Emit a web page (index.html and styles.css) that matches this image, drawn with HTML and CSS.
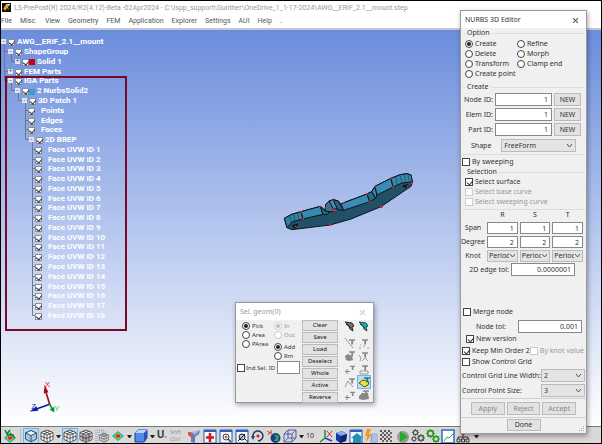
FILE: index.html
```html
<!DOCTYPE html>
<html lang="en">

<head>
  <meta charset="UTF-8">
  <meta name="viewport" content="width=device-width, initial-scale=1.0">
  <title>LS-PrePost</title>
  <link rel="stylesheet" href="styles.css">
</head>

<body>
  <!-- shared icon shapes -->
  <svg class="defs" width="0" height="0">
    <symbol id="funnel" viewBox="0 0 8 8"><path d="M0 1H8V3H5.500V8H3V3H0z"/></symbol>
    <symbol id="wirecube" viewBox="0 0 14 14">
      <path d="M7 1L13 3.500V10.500L7 13.500L1 10.500V3.500z" fill="#fff"/>
      <path d="M7 1L13 3.500V10.500L7 13.500L1 10.500V3.500zM1 3.500L7 6L13 3.500M7 6V13.500M1 7L7 9.500L13 7M4 2.200L10 4.800V12M10 2.200L4 4.800V12" fill="none" stroke="#333" stroke-width=".8"/>
    </symbol>
    <symbol id="window" viewBox="0 0 14 14">
      <path d="M1 1H13V14H1z" fill="#f6f9ff" stroke="#2a58a8"/><path d="M1 1H13V3H1z" fill="#2a62c4"/>
    </symbol>
    <symbol id="contour" viewBox="0 0 14 14">
      <path d="M1 7L7 2L13 7L7 12z" fill="#28a0d0"/><path d="M2.500 7L7 3L11.500 7L7 11z" fill="#50d050"/>
      <path d="M4 7L7 4.500L10 7L7 9.500z" fill="#f0e020"/><ellipse cx="7" cy="7" rx="2.200" ry="1.700" fill="#e02010"/>
    </symbol>
    <symbol id="gear" viewBox="0 0 8 8">
      <circle cx="4" cy="4" r="2.500" fill="none" stroke="currentColor" stroke-width="1.500"/>
      <path d="M4 0V1.500M4 6.500V8M0 4H1.500M6.500 4H8M1.200 1.200L2.200 2.200M5.800 5.800L6.800 6.800M6.800 1.200L5.800 2.200M2.200 5.800L1.200 6.800" stroke="currentColor"/>
    </symbol>
  </svg>

  <header class="titlebar">
    <svg class="app-icon" viewBox="0 0 9 9"><path d="M0 0H9V9H0z" fill="#111"/><path d="M1 6L3 3L4 1H5L7 2L6 4L7 7L5 5L3 8L2 6z" fill="#e8a020"/><path d="M5 1L8 1L7 3z" fill="#fff"/></svg>
    <span>LS-PrePost(R) 2024/R2(4.12)-Beta -02Apr2024 - C:\lspp_support\Gunther\OneDrive_1_1-17-2024\AWG__ERIF_2.1__mount.step</span>
  </header>

  <nav class="menubar">
    <a href="#">File</a>
    <a href="#">Misc.</a>
    <a href="#">View</a>
    <a href="#">Geometry</a>
    <a href="#">FEM</a>
    <a href="#">Application</a>
    <a href="#">Explorer</a>
    <a href="#">Settings</a>
    <a href="#">AUI</a>
    <a href="#">Help</a>
    <span>.</span>
  </nav>

  <main class="viewport">
    <div class="tree">
      <svg class="tree-lines" viewBox="0 0 45 283"><path d="M3.500 5V43.500H9M3.500 34.500H9M3.500 14.500H9M10.500 15V24.500H16M10.500 44V53.500H16M17.500 54V63.500H22M24.500 63V102.500H30M24.500 73.500H29M24.500 83.500H29M24.500 92.500H29M31.500 102V278.500H36M31.500 112.500H36M31.500 122.500H36M31.500 131.500H36M31.500 141.500H36M31.500 151.500H36M31.500 161.500H36M31.500 170.500H36M31.500 180.500H36M31.500 190.500H36M31.500 200.500H36M31.500 209.500H36M31.500 219.500H36M31.500 229.500H36M31.500 239.500H36M31.500 248.500H36M31.500 258.500H36M31.500 268.500H36"/></svg>
      <label class="node l0"><i class="exp">-</i><input type="checkbox" checked>AWG__ERIF_2.1__mount</label>
      <label class="node l1"><i class="exp">-</i><input type="checkbox" checked>ShapeGroup</label>
      <label class="node l2"><i class="exp">+</i><input type="checkbox" checked><i class="swatch red"></i>Solid 1</label>
      <label class="node l1"><i class="exp">+</i><input type="checkbox" checked>FEM Parts</label>
      <label class="node l1"><i class="exp">-</i><input type="checkbox" checked>IGA Parts</label>
      <label class="node l2"><i class="exp">-</i><input type="checkbox" checked><i class="swatch blue"></i>2 NurbsSolid2</label>
      <label class="node l3"><i class="exp">-</i><input type="checkbox" checked>3D Patch 1</label>
      <label class="node l3 leaf"><input type="checkbox" checked>Points</label>
      <label class="node l3 leaf"><input type="checkbox" checked>Edges</label>
      <label class="node l3 leaf"><input type="checkbox" checked>Faces</label>
      <label class="node l4"><i class="exp">-</i><input type="checkbox" checked>2D BREP</label>
      <label class="node l4 leaf"><input type="checkbox" checked>Face UVW ID 1</label>
      <label class="node l4 leaf"><input type="checkbox" checked>Face UVW ID 2</label>
      <label class="node l4 leaf"><input type="checkbox" checked>Face UVW ID 3</label>
      <label class="node l4 leaf"><input type="checkbox" checked>Face UVW ID 4</label>
      <label class="node l4 leaf"><input type="checkbox" checked>Face UVW ID 5</label>
      <label class="node l4 leaf"><input type="checkbox" checked>Face UVW ID 6</label>
      <label class="node l4 leaf"><input type="checkbox" checked>Face UVW ID 7</label>
      <label class="node l4 leaf"><input type="checkbox" checked>Face UVW ID 8</label>
      <label class="node l4 leaf"><input type="checkbox" checked>Face UVW ID 9</label>
      <label class="node l4 leaf"><input type="checkbox" checked>Face UVW ID 10</label>
      <label class="node l4 leaf"><input type="checkbox" checked>Face UVW ID 11</label>
      <label class="node l4 leaf"><input type="checkbox" checked>Face UVW ID 12</label>
      <label class="node l4 leaf"><input type="checkbox" checked>Face UVW ID 13</label>
      <label class="node l4 leaf"><input type="checkbox" checked>Face UVW ID 14</label>
      <label class="node l4 leaf"><input type="checkbox" checked>Face UVW ID 15</label>
      <label class="node l4 leaf"><input type="checkbox" checked>Face UVW ID 16</label>
      <label class="node l4 leaf"><input type="checkbox" checked>Face UVW ID 17</label>
      <label class="node l4 leaf"><input type="checkbox" checked>Face UVW ID 18</label>
    </div>
    <div class="highlight"></div>

    <!-- mount part -->
    <svg class="model" viewBox="0 0 450 225">
      <g stroke="#0a161c" stroke-width="3" stroke-linejoin="round">
        <path d="M28 160L50 148L78 140L136 124L144 130L150 138L152 118L162 108L175 104L190 108L198 118L204 114L276 87L290 80L300 64L348 40L376 29L396 26L408 30L412 52L408 64L318 125L228 162L165 180L50 194L36 188z" fill="#225066"/>
        <path d="M28 160L50 148L78 140L84 162L52 170L36 188z" fill="#357fa3"/>
        <path d="M78 140L136 124L144 148L84 162z" fill="#3789ae"/>
        <path d="M136 124L150 138L162 140L158 148L144 148z" fill="#2d6f8d"/>
        <path d="M152 118L162 108L176 128L180 140L162 140L150 138z" fill="#2f7898"/>
        <path d="M162 108L175 104L188 128L176 134z" fill="#3b8cae"/>
        <path d="M175 104L190 108L206 136L188 134z" fill="#28647f"/>
        <path d="M198 118L204 114L276 87L284 110L206 136z" fill="#3a8cb2"/>
        <path d="M276 87L290 80L302 100L284 110z" fill="#286985"/>
        <path d="M290 80L300 64L306 90L302 100z" fill="#357fa0"/>
        <path d="M300 64L348 40L354 66L306 90z" fill="#3a8cb2"/>
        <path d="M348 40L376 29L396 26L408 30L412 50L380 54L354 66z" fill="#3788ab"/>
      </g>
      <path d="M44 152L48 172M56 148L60 168M67 144L72 164M362 36L366 58M376 31L380 52M388 28L392 50M399 28L402 48" stroke="#174b60" stroke-width="2"/>
      <path d="M52 184L68 178M56 180L60 190M384 65L400 60M390 60L394 68" stroke="#080c10" stroke-width="6"/>
      <path d="M76 138h5v5h-5zM82 160h5v5h-5zM133 122h5v5h-5zM170 104h5v5h-5zM150 125h5v5h-5zM163 126h5v5h-5zM175 133h7v7h-7zM204 112h5v5h-5zM274 84h5v5h-5zM281 107h5v5h-5zM298 62h5v5h-5zM346 37h5v5h-5zM351 63h5v5h-5zM316 122h7v7h-7zM162 176h6v6h-6zM58 182h5v5h-5zM395 61h5v5h-5zM408 52h5v5h-5z" fill="#e82030"/>
    </svg>

    <svg class="axes" viewBox="0 0 120 110">
      <path d="M68 72L55 30" stroke="#a01010" stroke-width="5"/><path d="M53 14L50 40L64 36z" fill="#a01010"/>
      <path d="M68 72L24 88" stroke="#101a9a" stroke-width="5"/><path d="M8 94L28 78L34 92z" fill="#101a9a"/>
      <path d="M68 72L78 90" stroke="#109020" stroke-width="5"/><path d="M82 97L68 88L82 80z" fill="#109020"/>
      <text x="53" y="22" fill="#f01818">X</text>
      <text x="13" y="86" fill="#2030c8">Z</text>
      <text x="82" y="92" fill="#20d830">Y</text>
    </svg>
  </main>

  <footer class="toolbar">
    <div class="tools">
      <svg viewBox="0 0 14 14"><use href="#contour" y="2"/><path d="M2 1L4 5L7 1M7 4L12 9M4 6H11" stroke="#188030" fill="none" stroke-width="1.500"/></svg>
      <i class="sep"></i>
      <svg class="on" viewBox="0 0 14 14"><path d="M1.500 4L7 1.500L12.500 4V10L7 13L1.500 10z" fill="#a9c5e2" stroke="#35516c"/><path d="M1.500 4L7 6.500L12.500 4L7 1.500z" fill="#eef6ff" stroke="#35516c"/><path d="M7 6.500V13" stroke="#35516c"/></svg>
      <svg><use href="#wirecube"/></svg>
      <i class="arrow"></i>
      <svg class="on"><use href="#wirecube"/></svg>
      <svg><use href="#wirecube"/><path d="M2 4L7 7L12 4V10L7 13L2 10z" fill="#444" opacity=".4"/></svg>
      <svg viewBox="0 0 14 14"><path d="M1 14V1H9M3 14V3H11" stroke="#8c8cd8" fill="none" stroke-dasharray="1 1"/><use href="#wirecube" x="4" y="3" width="10" height="11"/></svg>
      <svg><use href="#contour"/></svg>
      <i class="arrow"></i>
      <svg viewBox="0 0 14 14"><path d="M1 4L4 1H13V9L10 13H1z" fill="#5389ec" stroke="#1f3f9a"/><path d="M1 4L4 1H13L10 4z" fill="#b8d4ff"/><path d="M10 4L13 1V9L10 13z" fill="#2853b8"/></svg>
      <i class="arrow"></i>
      <b class="undo">U<small>●</small></b>
      <span class="shift">Shft<br>Ctrl</span>
      <svg viewBox="0 0 14 14"><path d="M1 3H9L13 1L12 5L8 8V14L4 13V8z" fill="#5a80c8"/><path d="M1 3L7 5L5 9L1 6z" fill="#e05040"/><path d="M4 3L13 1L8 6z" fill="#9ab6e4"/></svg>
      <svg viewBox="0 0 14 14"><use href="#window"/><path d="M7 4V13M3 8.500H11" stroke="#d01818" stroke-width="2.500"/></svg>
      <svg viewBox="0 0 14 14"><use href="#window"/><circle cx="7" cy="8" r="3" fill="#fff" stroke="#345"/><path d="M7 6.500V9.500M5.500 8H8.500" stroke="#d01818"/><path d="M9 10L12 13" stroke="#345" stroke-width="1.500"/></svg>
      <svg viewBox="0 0 14 14"><use href="#window"/><circle cx="7" cy="8" r="3" fill="#bcd" stroke="#222"/><path d="M3 12L10 5M10 10L13 13" stroke="#222"/></svg>
      <svg viewBox="0 0 14 14"><path d="M2 8A5 5 0 1 1 7 12" fill="none" stroke="#253a60" stroke-width="1.500"/><path d="M0 7L4 7L2 11z" fill="#253a60"/><circle cx="7" cy="7" r="1.500" fill="#d01818"/></svg>
      <svg viewBox="0 0 14 14"><path d="M0 2L5 5M1 6L3 3M4 1V4" stroke="#e03030"/><circle cx="8.500" cy="9" r="5" fill="#183b98"/><path d="M7 5L12 7L11 12L7 12L9 9z" fill="#28b038"/></svg>
      <svg viewBox="0 0 14 14"><path d="M1 5H9V13H1zM5 1H13V9H5zM1 5L5 1M9 5L13 1M9 13L13 9M1 13L5 9" fill="none" stroke="#5262a6"/></svg>
      <i class="arrow"></i>
      <span class="count">10</span>
    </div>
    <div class="tools tight">
      <svg viewBox="0 0 14 14"><path d="M6 1V9L1 13" stroke="#209030" fill="none" stroke-width="1.500"/><path d="M6 9L13 12" stroke="#2040c0" stroke-width="1.500"/><path d="M8 2L13 8M13 2L8 8" stroke="#d03030"/></svg>
      <svg viewBox="0 0 14 14"><path d="M2 4L8 2L13 5L12 12L6 14L2 11z" fill="#1736a8"/><path d="M2 4L8 2L13 5L7 7z" fill="#87a9f0"/><path d="M7 7L13 5L12 12L6 14z" fill="#0e2370"/></svg>
      <svg viewBox="0 0 14 14"><use href="#window"/><path d="M2 9L8 4L14 9H12V14H4V9z" fill="#1f91b6"/></svg>
      <svg viewBox="0 0 14 14"><path d="M3 0H7L5 5H8L2 13L3 7H1z" fill="#f09a18"/><path d="M8 5H13V13H7zM8 7H12M8 9H12M8 11H12" fill="#e7ecfa" stroke="#7f92c9"/></svg>
      <svg viewBox="0 0 14 14"><path d="M1 2H13M1 6H13M1 10H13" stroke="#555" stroke-width="2" stroke-dasharray="2 2"/><path d="M3 4H14M3 8H14M3 12H14" stroke="#666" stroke-width="2" stroke-dasharray="2 2"/></svg>
    </div>
    <div class="tools tight">
      <svg viewBox="0 0 14 14"><circle cx="7" cy="8" r="6" fill="#999"/><path d="M4 2L12 8L4 13z" fill="#1fae28"/></svg>
      <svg viewBox="0 0 14 14" color="#555"><use href="#gear" x="1" y="0" width="7" height="7"/><use href="#gear" x="6" y="5" width="8" height="8"/><use href="#gear" x="0" y="7" width="6" height="6"/></svg>
      <svg viewBox="0 0 14 14" color="#2b9a20"><use href="#gear" x="0" y="0" width="9" height="9"/><use href="#gear" x="6" y="6" width="8" height="8"/></svg>
      <svg viewBox="0 0 14 14"><path d="M1 1H13V14H1z" fill="#fff" stroke="#2a6fc0" stroke-width="1.500"/><path d="M3 12L6 8L8 9L12 5" fill="none" stroke="#30a060"/></svg>
      <svg viewBox="0 0 14 14"><path d="M5 1H9V5H5z" fill="#d39b27" stroke="#6f5516"/><path d="M7 5V8M2 11V8H12V11M7 8V11" stroke="#333" fill="none"/><path d="M1 10H4V13H1zM5.500 10H8.500V13H5.500zM10 10H13V13H10z" fill="#ddd" stroke="#333"/></svg>
      <i class="arrow"></i>
    </div>
  </footer>

  <!-- geometry selection dialog -->
  <section class="dialog geom">
    <div class="dialog-title"><span>Sel. geom(0)</span><button class="close" aria-label="Close"></button></div>
    <div class="geom-body">
      <div class="geom-left">
        <div class="pick">
          <div>
            <label><input type="radio" name="pick" checked>Pick</label>
            <label><input type="radio" name="pick">Area</label>
            <label><input type="radio" name="pick">PArea</label>
          </div>
          <div>
            <label class="off"><input type="radio" name="inout" checked disabled>In</label>
            <label class="off"><input type="radio" name="inout" disabled>Out</label>
            <label class="add"><input type="radio" name="add" checked>Add</label>
            <label><input type="radio" name="add">Rm</label>
          </div>
        </div>
        <div class="ind">
          <label><input type="checkbox">Ind Sel.</label>
          <label for="geom-id">ID</label>
          <input type="text" id="geom-id">
        </div>
      </div>
      <div class="geom-buttons">
        <button>Clear</button>
        <button>Save</button>
        <button>Load</button>
        <button>Deselect</button>
        <button>Whole</button>
        <button>Active</button>
        <button>Reverse</button>
      </div>
      <div class="geom-icons">
        <svg viewBox="0 0 12 12"><path d="M1 2L8 3L10 6L8 7L9 11L6 9L5 6z" fill="#777" stroke="#222"/><path d="M2 4L7 8" stroke="#222"/></svg>
        <svg viewBox="0 0 12 12"><path d="M1 2L8 3L10 6L8 7L9 11L6 9L5 6z" fill="#20a8a8" stroke="#174f55"/><path d="M2 4L7 8" stroke="#174f55"/></svg>
        <svg viewBox="0 0 12 12"><path d="M1 1L9 11" stroke="#999"/><use href="#funnel" x="5" y="1" width="6" height="7"/></svg>
        <svg viewBox="0 0 12 12"><path d="M1 11H3M5 9H7M9 11H11M2 8H3" stroke="#999"/><use href="#funnel" x="4" y="1" width="6" height="7"/></svg>
        <svg viewBox="0 0 12 12"><path d="M1 6L4 4L8 6L9 10L5 11L2 10z"/><use href="#funnel" x="5" y="0" width="6" height="7"/></svg>
        <svg viewBox="0 0 12 12"><path d="M1 5L3 8L2 11M4 11L7 8L10 11" stroke="#999" fill="none"/><use href="#funnel" x="4" y="1" width="6" height="7"/></svg>
        <svg viewBox="0 0 12 12"><path d="M3 6V11M1 8.500H6" stroke="#888"/><use href="#funnel" x="6" y="1" width="5" height="7"/></svg>
        <svg viewBox="0 0 12 12"><path d="M2 8H10V11H2z" stroke="#999" fill="none"/><use href="#funnel" x="4" y="1" width="6" height="7"/></svg>
        <svg viewBox="0 0 12 12"><path d="M1 11L4 5L9 11" stroke="#999" fill="none"/><use href="#funnel" x="5" y="1" width="6" height="7"/></svg>
        <svg class="on" viewBox="0 0 12 12"><path d="M1 7L5 4L11 6L10 9L6 11L4 9z" fill="#f0e628" stroke="#555a18"/><use href="#funnel" x="6" y="0" width="6" height="7" fill="#187f91"/></svg>
        <svg viewBox="0 0 12 12"><path d="M3 6V11M1 8.500H6" stroke="#888"/><use href="#funnel" x="6" y="1" width="5" height="7"/></svg>
        <svg viewBox="0 0 12 12"><path d="M1 7L4 4L10 4L11 10L5 11L1 10z" fill="#888"/><use href="#funnel" x="5" y="0" width="6" height="7"/></svg>
      </div>
    </div>
  </section>

  <!-- nurbs editor -->
  <section class="dialog editor">
    <div class="dialog-title"><span>NURBS 3D Editor</span><button class="close" aria-label="Close"></button></div>
    <fieldset>
      <legend>Option</legend>
      <div class="options">
        <label><input type="radio" name="option" checked>Create</label>
        <label><input type="radio" name="option">Refine</label>
        <label><input type="radio" name="option">Delete</label>
        <label><input type="radio" name="option">Morph</label>
        <label><input type="radio" name="option">Transform</label>
        <label><input type="radio" name="option">Clamp end</label>
        <label><input type="radio" name="option">Create point</label>
      </div>
    </fieldset>
    <fieldset class="create">
      <legend>Create</legend>
      <div class="ids">
        <label for="node-id">Node ID:</label><input type="text" id="node-id" value="1"><button>NEW</button>
        <label for="elem-id">Elem ID:</label><input type="text" id="elem-id" value="1"><button>NEW</button>
        <label for="part-id">Part ID:</label><input type="text" id="part-id" value="1"><button>NEW</button>
      </div>
      <div class="shape">
        <label for="shape">Shape</label>
        <select id="shape"><option>FreeForm</option></select>
      </div>
    </fieldset>
    <label class="check sweep"><input type="checkbox">By sweeping</label>
    <fieldset class="selection">
      <legend>Selection</legend>
      <label class="check"><input type="checkbox" checked>Select surface</label>
      <label class="check off"><input type="checkbox" disabled>Select base curve</label>
      <label class="check off"><input type="checkbox" disabled>Select sweeping curve</label>
    </fieldset>
    <div class="rst">
      <span></span><span>R</span><span>S</span><span>T</span>
      <label for="span-r">Span</label>
      <input type="text" id="span-r" value="1"><input type="text" aria-label="Span S" value="1"><input type="text" aria-label="Span T" value="1">
      <label for="degree-r">Degree</label>
      <input type="text" id="degree-r" value="2"><input type="text" aria-label="Degree S" value="2"><input type="text" aria-label="Degree T" value="2">
      <label for="knot-r">Knot</label>
      <select id="knot-r"><option>Periodic</option></select>
      <select aria-label="Knot S"><option>Periodic</option></select>
      <select aria-label="Knot T"><option>Periodic</option></select>
    </div>
    <div class="tol edge">
      <label for="edge-tol">2D edge tol:</label>
      <input type="text" id="edge-tol" value="0.0000001">
    </div>
    <label class="check merge"><input type="checkbox">Merge node</label>
    <div class="tol">
      <label for="node-tol">Node tol:</label>
      <input type="text" id="node-tol" value="0.001">
    </div>
    <label class="check version"><input type="checkbox" checked>New version</label>
    <div class="order">
      <label class="check"><input type="checkbox" checked>Keep Min Order 2</label>
      <label class="check off"><input type="checkbox" disabled>By knot value</label>
    </div>
    <label class="check show"><input type="checkbox">Show Control Grid</label>
    <div class="control">
      <label for="grid-width">Control Grid Line Width:</label>
      <select id="grid-width"><option>2</option></select>
    </div>
    <div class="control">
      <label for="point-size">Control Point Size:</label>
      <select id="point-size"><option>3</option></select>
    </div>
    <div class="actions">
      <button disabled>Apply</button>
      <button disabled>Reject</button>
      <button disabled>Accept</button>
    </div>
    <div class="finish"><button class="done">Done</button></div>
    <svg class="grip" viewBox="0 0 6 6"><path d="M4 0h1v1h-1zM2 2h1v1h-1zM4 2h1v1h-1zM0 4h1v1h-1zM2 4h1v1h-1zM4 4h1v1h-1z" fill="#aaa"/></svg>
  </section>
</body>

</html>
```
FILE: styles.css
```css
* {
  box-sizing: border-box;
}

body {
  display: flex;
  flex-direction: column;
  position: relative;
  height: 100vh;
  margin: 0;
  border: 1px solid #000;
  background: #fff;
  color: #333;
  font: 7px/10px "Noto Sans", "Open Sans", sans-serif;
  overflow: hidden;
}

button,
input,
select {
  margin: 0;
  font: inherit;
  color: inherit;
  border-radius: 0;
}

.defs {
  position: absolute;
}

.titlebar {
  display: flex;
  align-items: center;
  gap: 3px;
  height: 13px;
  padding-left: 1px;
  color: #999;
  font-family: Roboto, sans-serif;
  white-space: nowrap;
}

.app-icon {
  width: 9px;
  height: 9px;
}

.menubar {
  display: flex;
  gap: 8px;
  height: 16px;
  padding-top: 2px;
  border-bottom: 2px solid #c4c6ca;
  font-family: Roboto, sans-serif;
}

.menubar a {
  color: #555;
  text-decoration: none;
}

/* viewport */
.viewport {
  position: relative;
  flex: 1;
  background: linear-gradient(#6b8ddd, #fff);
}

.tree {
  position: relative;
  display: flex;
  flex-direction: column;
  height: 290px;
  padding-top: 7px;
  color: #fff;
  font: bold 8px/9px Roboto, sans-serif;
}

.tree-lines {
  position: absolute;
  top: 7px;
  left: 0;
  width: 45px;
  height: 283px;
  fill: none;
  stroke: #6d7890;
}

.node {
  position: relative;
  display: flex;
  align-items: center;
  flex: 1;
  white-space: nowrap;
}

.l1 {
  padding-left: 7px;
}

.l2 {
  padding-left: 14px;
}

.l3 {
  padding-left: 21px;
}

.l4 {
  padding-left: 28px;
}

.l3.leaf {
  padding-left: 27px;
}

.l4.leaf {
  padding-left: 34px;
}

.exp {
  width: 5px;
  height: 5px;
  margin-right: 2px;
  background: #e4e6ec;
  color: #555;
  font: 7px/4px "Liberation Sans", Arial, sans-serif;
  text-align: center;
}

.swatch {
  width: 6px;
  height: 6px;
  margin: 2px 2px 0 -2px;
}

.swatch.red {
  background: #c8001c;
}

.swatch.blue {
  background: #3c9ad8;
}

.highlight {
  position: absolute;
  top: 46px;
  left: 4px;
  width: 122px;
  height: 255px;
  border: 2px solid #7c0826;
}

.model {
  position: absolute;
  top: 135px;
  left: 274px;
  width: 150px;
  height: 75px;
}

.axes {
  position: absolute;
  left: 26px;
  bottom: 9px;
  width: 40px;
  height: 37px;
  font: 24px "Liberation Sans", Arial, sans-serif;
}

/* toolbar */
.toolbar {
  display: flex;
  height: 17px;
  padding: 2px 0 0 2px;
  border-top: 1px solid #777;
  background: #d9d9d9;
  overflow: hidden;
}

.tools {
  display: flex;
  align-items: center;
  gap: 2px;
  height: 14px;
}

.tools.tight {
  gap: 1px;
  margin-left: 3px;
}

.tools svg {
  width: 14px;
  height: 14px;
}

.tools .on,
.geom-icons .on {
  outline: 1px solid #74b3e8;
  background: #b9dbf6;
}

.sep {
  width: 1px;
  height: 14px;
  margin: 0 1px;
  background: #bbb;
}

.arrow {
  width: 5px;
  border: 2px solid transparent;
  border-top: 3px solid #222;
  border-bottom: 0;
}

.tight .arrow {
  margin-left: 3px;
}

.undo {
  width: 11px;
  font: bold 10px/12px "Liberation Sans", Arial, sans-serif;
  white-space: nowrap;
}

.undo small {
  color: #66799c;
  font-size: 4px;
}

.shift {
  width: 15px;
  color: #999;
  font-size: 6px;
  line-height: 7px;
}

.count {
  width: 10px;
}

/* dialogs */
.dialog {
  position: absolute;
  border: 1px solid #9a9a9a;
  background: #f0f0f0;
  box-shadow: 1px 2px 5px rgba(0, 0, 0, 0.35);
  white-space: nowrap;
}

.dialog-title {
  display: flex;
  justify-content: space-between;
  align-items: center;
  height: 17px;
  padding: 0 4px;
  background: #fff;
}

.close {
  position: relative;
  width: 12px;
  height: 12px;
  padding: 0;
  border: 0;
  background: none;
}

.close::before,
.close::after {
  content: "";
  position: absolute;
  top: 6px;
  left: 2px;
  width: 7px;
  height: 1px;
  background: #555;
  transform: rotate(45deg);
}

.close::after {
  transform: rotate(-45deg);
}

.dialog label {
  display: flex;
  align-items: center;
}

input[type="checkbox"],
input[type="radio"] {
  flex: none;
  position: relative;
  appearance: none;
  width: 8px;
  height: 8px;
  margin-right: 2px;
  border: 1px solid #444;
  background: #fff;
}

.node input[type="checkbox"] {
  width: 7px;
  height: 7px;
  margin: 2px 2px 0 0;
  border-color: #8a8f9c;
}

.node.leaf input[type="checkbox"] {
  margin-right: 6px;
}

input[type="radio"] {
  border-radius: 50%;
}

input[type="radio"]:checked::before {
  content: "";
  position: absolute;
  top: 1px;
  left: 1px;
  width: 4px;
  height: 4px;
  border-radius: 50%;
  background: #222;
}

input[type="checkbox"]:checked::before {
  content: "";
  position: absolute;
  top: 0;
  left: 2px;
  width: 3px;
  height: 5px;
  border: solid #333;
  border-width: 0 1px 1px 0;
  transform: rotate(40deg);
}

.node input[type="checkbox"]:checked::before {
  left: 1px;
  height: 4px;
}

input:disabled {
  border-color: #ccc;
}

input[type="radio"]:disabled,
input[type="checkbox"]:disabled {
  border-color: #ccc;
}

input[type="radio"]:disabled:checked::before {
  background: #bbb;
}

.dialog .off {
  color: #999;
}

.dialog input[type="text"] {
  min-width: 0;
  width: 100%;
  height: 13px;
  padding: 0 3px;
  border: 1px solid #888;
  background: #fff;
  text-align: right;
}

.dialog button:not(.close) {
  padding: 0;
  border: 1px solid #bbb;
  background: #e2e2e2;
}

.dialog select {
  appearance: none;
  min-width: 0;
  height: 13px;
  padding: 0 9px 0 2px;
  border: 1px solid #bbb;
  background: #e4e4e4 url("data:image/svg+xml,%3Csvg xmlns='http://www.w3.org/2000/svg' width='5' height='4'%3E%3Cpath d='M0 0L2.500 3L5 0' fill='none' stroke='%23555'/%3E%3C/svg%3E") no-repeat right 3px center;
}

/* nurbs editor */
.editor {
  top: 9px;
  right: 14px;
  width: 127px;
  padding-bottom: 2px;
}

fieldset {
  min-width: 0;
  margin: 0 2px;
  padding: 0;
  border: 0;
  border-top: 1px solid #dcdcdc;
}

legend {
  height: 10px;
  margin-left: 2px;
  padding: 0 2px;
}

.options {
  display: grid;
  grid-template-columns: 52px 1fr;
  grid-auto-rows: 10px;
  padding: 1px 2px;
}

.create {
  margin-top: 2px;
  padding-bottom: 2px;
  border-bottom: 1px solid #dcdcdc;
}

.ids {
  display: grid;
  grid-template-columns: 30px 57px 27px;
  gap: 2px;
  padding-top: 1px;
}

.ids label,
.tol label {
  justify-content: flex-end;
}

.shape {
  display: flex;
  gap: 10px;
  margin-top: 3px;
  padding-left: 8px;
}

.shape select {
  width: 75px;
}

.check {
  height: 10px;
}

.sweep,
.show {
  margin-left: 1px;
}

.sweep {
  margin-top: 2px;
}

.selection {
  padding-bottom: 2px;
  border-bottom: 1px solid #dcdcdc;
}

.selection .check {
  margin-left: 2px;
}

.rst {
  display: grid;
  grid-template-columns: 24px 1fr 1fr 1fr;
  grid-template-rows: 10px 12px 12px 12px;
  gap: 2px;
  padding-right: 3px;
}

.rst span {
  text-align: center;
}

.rst label {
  justify-content: center;
}

.dialog .rst input,
.dialog .rst select {
  height: 12px;
}

.dialog .rst select {
  padding: 0 8px 0 1px;
  background-position: right 2px center;
}

.tol {
  display: flex;
  gap: 2px;
  margin-top: 3px;
  padding-right: 4px;
}

.tol label {
  flex: 1;
}

.dialog .tol input {
  width: 64px;
}

.tol.edge {
  margin-top: 1px;
  padding-right: 11px;
}

.tol:not(.edge) {
  gap: 12px;
}

.merge {
  margin: 31px 0 0 2px;
}

.version {
  margin: 1px 0 0 5px;
}

.order {
  display: flex;
  justify-content: space-between;
  margin: 2px 2px 1px 1px;
}

.control {
  display: flex;
  justify-content: space-between;
  margin-top: 2px;
  padding: 0 1px;
}

.control select {
  width: 44px;
}

.actions {
  display: flex;
  gap: 2px;
  margin-top: 1px;
  padding: 3px 10px 2px;
  border-top: 1px solid #d0d0d0;
  border-bottom: 1px solid #d0d0d0;
}

.actions button {
  flex: 1;
  height: 13px;
  color: #888;
}

.finish {
  display: flex;
  justify-content: center;
  padding-top: 1px;
}

.dialog .done {
  width: 34px;
  height: 12px;
  border: 1px solid #1878d0;
  line-height: 10px;
}

.grip {
  position: absolute;
  right: 1px;
  bottom: 1px;
  width: 6px;
  height: 6px;
}

/* sel. geom */
.geom {
  top: 301px;
  left: 234px;
  width: 139px;
  height: 101px;
  font-size: 6px;
}

.geom .dialog-title {
  color: #999;
  font-size: 7px;
}

.geom .close {
  opacity: 0.3;
}

.geom-body {
  display: flex;
  padding: 0 2px 0 1px;
}

.geom-left {
  width: 65px;
}

.geom label {
  height: 9px;
}

.pick {
  display: grid;
  grid-template-columns: 32px 1fr;
  padding: 1px 0 0 5px;
}

.pick .add {
  margin-top: 3px;
}

.ind {
  display: flex;
  align-items: center;
  gap: 2px;
  padding: 1px 2px 0 0;
}

.ind input[type="checkbox"] {
  margin-right: 1px;
}

.geom-buttons {
  display: grid;
  grid-auto-rows: 11px;
  gap: 1px;
  width: 36px;
}

.geom-buttons button {
  color: #111;
  line-height: 9px;
}

.geom-icons {
  display: grid;
  grid-template-columns: 12px 12px;
  grid-template-rows: 16px;
  grid-auto-rows: 12px;
  gap: 1px 2px;
  padding-left: 6px;
  fill: #888;
}

.geom-icons svg {
  width: 12px;
  height: 12px;
}
```
